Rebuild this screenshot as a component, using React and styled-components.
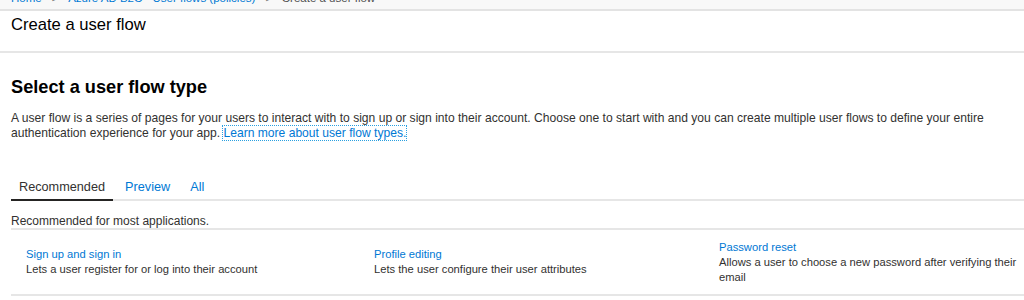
import React, { useState } from "react";
import styled, { createGlobalStyle } from "styled-components";

const GlobalStyle = createGlobalStyle`
  body {
    margin: 0;
    background: #ffffff;
    font-family: "Segoe UI", "Liberation Sans", Arial, sans-serif;
    color: #323130;
  }
`;

const flows = [
  {
    name: "Sign up and sign in",
    description: "Lets a user register for or log into their account",
  },
  {
    name: "Profile editing",
    description: "Lets the user configure their user attributes",
  },
  {
    name: "Password reset",
    description:
      "Allows a user to choose a new password after verifying their email",
  },
];

function App() {
  const [activeTab, setActiveTab] = useState("recommended");

  return (
    <Page>
      <GlobalStyle />
      <Breadcrumb>
        <Crumbs>
          <CrumbLink>Home</CrumbLink>
          <Chevron>&gt;</Chevron>
          <CrumbLink>Azure AD B2C - User flows (policies)</CrumbLink>
          <Chevron>&gt;</Chevron>
          <span>Create a user flow</span>
        </Crumbs>
      </Breadcrumb>
      <Header>
        <h1>Create a user flow</h1>
      </Header>
      <Content>
        <h2>Select a user flow type</h2>
        <Intro>
          A user flow is a series of pages for your users to interact with to
          sign up or sign into their account. Choose one to start with and you
          can create multiple user flows to define your entire authentication
          experience for your app. <a href="#">Learn more about user flow types.</a>
        </Intro>
        <Tabs>
          <Tab
            $active={activeTab === "recommended"}
            onClick={() => setActiveTab("recommended")}
          >
            Recommended
          </Tab>
          <Tab
            $active={activeTab === "preview"}
            onClick={() => setActiveTab("preview")}
          >
            Preview
          </Tab>
          <Tab $active={activeTab === "all"} onClick={() => setActiveTab("all")}>
            All
          </Tab>
        </Tabs>
        <Caption>Recommended for most applications.</Caption>
        <FlowGrid>
          {flows.map((flow) => (
            <Flow key={flow.name}>
              <a href="#">{flow.name}</a>
              <p>{flow.description}</p>
            </Flow>
          ))}
        </FlowGrid>
      </Content>
    </Page>
  );
}

const Page = styled.div`
  width: 1024px;
  height: 300px;
  overflow: hidden;
`;

const Breadcrumb = styled.div`
  height: 9px;
  overflow: hidden;
  background: #f8f8f8;
  border-bottom: 2px solid #e3e3e3;
`;

const Crumbs = styled.div`
  display: flex;
  align-items: center;
  gap: 10px;
  margin-top: -10px;
  padding-left: 11px;
  font-size: 11.5px;
  line-height: 16px;
  color: #505050;
`;

const CrumbLink = styled.span`
  color: #0078d4;
`;

const Chevron = styled.span`
  color: #777777;
  font-size: 11px;
`;

const Header = styled.div`
  height: 40px;
  padding: 0 11px;
  border-bottom: 2px solid #e6e6e6;
  h1 {
    margin: 0;
    padding-top: 3px;
    font-size: 16.6px;
    line-height: 22px;
    font-weight: 400;
    color: #000000;
  }
`;

const Content = styled.div`
  padding: 0 0 0 11px;
  h2 {
    margin: 22px 0 0;
    font-size: 18.2px;
    line-height: 24px;
    font-weight: 700;
    color: #000000;
  }
  a {
    color: #0078d4;
    text-decoration: none;
  }
`;

const Intro = styled.p`
  margin: 12px 0 0;
  width: 1005px;
  font-size: 12.1px;
  line-height: 15px;
  a {
    outline: 1px dotted #2aa0e0;
  }
`;

const Tabs = styled.div`
  display: flex;
  gap: 4px;
  margin-top: 31px;
  border-bottom: 2px solid #e6e6e6;
`;

const Tab = styled.button`
  border: none;
  background: none;
  padding: 0 8px;
  height: 29px;
  font-family: inherit;
  font-size: 12.7px;
  color: ${(p) => (p.$active ? "#323130" : "#0078d4")};
  box-shadow: ${(p) => (p.$active ? "inset 0 -2px 0 #252423" : "none")};
  margin-bottom: -2px;
  cursor: pointer;
`;

const Caption = styled.div`
  height: 29px;
  box-sizing: border-box;
  padding-top: 13px;
  font-size: 12px;
  line-height: 15px;
  border-bottom: 2px solid #e6e6e6;
`;

const FlowGrid = styled.div`
  display: grid;
  grid-template-columns: 348px 345px 1fr;
  padding: 0 0 0 15px;
  height: 64px;
  align-items: center;
  border-bottom: 2px solid #e6e6e6;
`;

const Flow = styled.div`
  font-size: 11.2px;
  line-height: 15px;
  p {
    margin: 0;
    max-width: 305px;
  }
`;

export default App;
